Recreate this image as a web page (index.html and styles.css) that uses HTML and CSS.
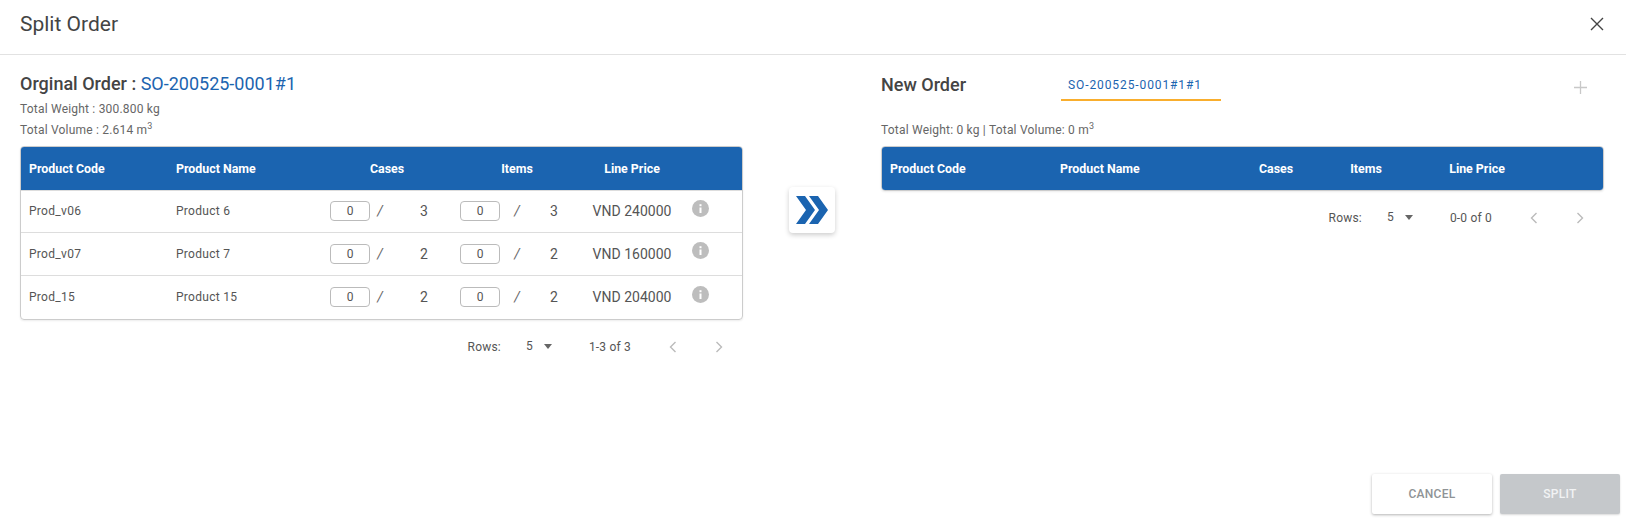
FILE: index.html
```html
<!DOCTYPE html>
<html lang="en">
<head>
<meta charset="utf-8">
<title>Split Order</title>
<link rel="stylesheet" href="styles.css">
</head>
<body>
<div class="dialog">
  <header class="dialog-head">
    <h1 class="dialog-title">Split Order</h1>
    <svg class="close-icon" viewBox="0 0 14 14" width="14" height="14" aria-label="Close"><path d="M1 1l12 12M13 1L1 13"/></svg>
  </header>
  <main class="dialog-body">
    <section class="panel panel-left">
      <h2 class="order-title orig-title">Orginal Order : <span class="order-code">SO-200525-0001#1</span></h2>
      <p class="meta">Total Weight : 300.800 kg</p>
      <p class="meta">Total Volume : 2.614 m<sup>3</sup></p>
      <div class="table">
        <div class="row row-head cols-left">
          <div class="cell">Product Code</div><div class="cell">Product Name</div>
          <div class="cell center">Cases</div><div class="cell center">Items</div><div class="cell center">Line Price</div><div></div>
        </div>
        <div class="row cols-left">
          <div class="cell small">Prod_v06</div><div class="cell small">Product 6</div>
          <div class="qty qty-cases"><input class="qty-input" value="0"><span class="slash">/</span><span class="qty-max">3</span></div>
          <div class="qty qty-items"><input class="qty-input" value="0"><span class="slash">/</span><span class="qty-max">3</span></div>
          <div class="cell center price">VND 240000</div>
          <div class="info"><svg viewBox="0 0 17 17" width="17" height="17"><circle cx="8.5" cy="8.5" r="8.5" fill="#bdbdbd"/><rect x="7.5" y="7.5" width="2" height="5.5" fill="#fff"/><rect x="7.5" y="4.2" width="2" height="2" fill="#fff"/></svg></div>
        </div>
        <div class="row cols-left">
          <div class="cell small">Prod_v07</div><div class="cell small">Product 7</div>
          <div class="qty qty-cases"><input class="qty-input" value="0"><span class="slash">/</span><span class="qty-max">2</span></div>
          <div class="qty qty-items"><input class="qty-input" value="0"><span class="slash">/</span><span class="qty-max">2</span></div>
          <div class="cell center price">VND 160000</div>
          <div class="info"><svg viewBox="0 0 17 17" width="17" height="17"><circle cx="8.5" cy="8.5" r="8.5" fill="#bdbdbd"/><rect x="7.5" y="7.5" width="2" height="5.5" fill="#fff"/><rect x="7.5" y="4.2" width="2" height="2" fill="#fff"/></svg></div>
        </div>
        <div class="row cols-left">
          <div class="cell small">Prod_15</div><div class="cell small">Product 15</div>
          <div class="qty qty-cases"><input class="qty-input" value="0"><span class="slash">/</span><span class="qty-max">2</span></div>
          <div class="qty qty-items"><input class="qty-input" value="0"><span class="slash">/</span><span class="qty-max">2</span></div>
          <div class="cell center price">VND 204000</div>
          <div class="info"><svg viewBox="0 0 17 17" width="17" height="17"><circle cx="8.5" cy="8.5" r="8.5" fill="#bdbdbd"/><rect x="7.5" y="7.5" width="2" height="5.5" fill="#fff"/><rect x="7.5" y="4.2" width="2" height="2" fill="#fff"/></svg></div>
        </div>
      </div>
      <div class="pager">
        <span class="pager-label">Rows:</span>
        <span class="pager-size">5</span>
        <span class="pager-caret"></span>
        <span class="pager-range">1-3 of 3</span>
        <svg class="pager-nav" viewBox="0 0 8 12" width="8" height="12"><path d="M6.5 1L1.5 6l5 5"/></svg>
        <svg class="pager-nav" viewBox="0 0 8 12" width="8" height="12"><path d="M1.5 1l5 5-5 5"/></svg>
      </div>
    </section>

    <div class="transfer-col">
      <button class="transfer-btn" aria-label="Move to new order">
        <svg viewBox="0 0 32 28" width="32" height="28"><path d="M0 0h9l10 14-10 14H0l10-14z"/><path d="M13 0h9l10 14-10 14h-9l10-14z"/></svg>
      </button>
    </div>

    <section class="panel panel-right">
      <div class="new-head">
        <h2 class="order-title new-title">New Order</h2>
        <div class="tab">SO-200525-0001#1#1</div>
        <svg class="plus-icon" viewBox="0 0 13 13" width="13" height="13"><path d="M6.5 0v13M0 6.5h13"/></svg>
      </div>
      <p class="meta new-meta">Total Weight: 0 kg | Total Volume: 0 m<sup>3</sup></p>
      <div class="table">
        <div class="row row-head cols-right">
          <div class="cell">Product Code</div><div class="cell">Product Name</div>
          <div class="cell center">Cases</div><div class="cell center">Items</div><div class="cell center">Line Price</div><div></div>
        </div>
      </div>
      <div class="pager">
        <span class="pager-label">Rows:</span>
        <span class="pager-size">5</span>
        <span class="pager-caret"></span>
        <span class="pager-range">0-0 of 0</span>
        <svg class="pager-nav" viewBox="0 0 8 12" width="8" height="12"><path d="M6.5 1L1.5 6l5 5"/></svg>
        <svg class="pager-nav" viewBox="0 0 8 12" width="8" height="12"><path d="M1.5 1l5 5-5 5"/></svg>
      </div>
    </section>
  </main>
  <footer class="dialog-foot">
    <button class="btn btn-cancel">CANCEL</button>
    <button class="btn btn-split">SPLIT</button>
  </footer>
</div>
</body>
</html>
```
FILE: styles.css
```css
* { box-sizing: border-box; }
html, body { margin: 0; height: 100%; background: #fff; }
body { font-family: Roboto, "Liberation Sans", sans-serif; color: #444; overflow: hidden; }
.dialog { height: 521px; display: flex; flex-direction: column; }

.dialog-head {
  height: 55px; flex: none; display: flex; align-items: center; justify-content: space-between;
  padding: 0 22px 6px 20px; border-bottom: 1px solid #e2e2e2;
}
.dialog-title { margin: 0; font-size: 21px; font-weight: 400; color: #444; }
.close-icon { fill: none; stroke: #444; stroke-width: 1.4; }

.dialog-body { flex: 1; display: flex; align-items: flex-start; padding-left: 20px; }
.panel-left { width: 723px; flex: none; padding-top: 17px; }
.panel-right { width: 723px; flex: none; padding-top: 17px; }
.transfer-col { width: 138px; flex: none; display: flex; justify-content: center; padding: 132px 0 0 0; }

.order-title { margin: 0; font-size: 18px; line-height: 24px; font-weight: 500; color: #444; }
.orig-title { margin-bottom: 3px; }
.order-code { color: #1b64b0; font-weight: 400; }
.meta { margin: 0; font-size: 12px; line-height: 21px; color: #666; letter-spacing: .2px; }
.meta sup { font-size: 9px; line-height: 0; }

.table { border: 1px solid #ccc; border-radius: 4px; overflow: hidden; margin-top: 5px; box-shadow: 0 1px 2px rgba(0,0,0,.08); }
.row { display: grid; align-items: center; height: 43px; padding-bottom: 1px; border-top: 1px solid #ddd; font-size: 12px; }
.row:nth-child(2) { height: 42px; }
.row:nth-child(4) { height: 44px; }
.row-head { background: #1b64b0; color: #fff; font-weight: 700; font-size: 12.4px; border-top: 0; padding-bottom: 0; }
.cols-left { grid-template-columns: 147px 154px 130px 130px 100px 36px 1fr; }
.cols-right { grid-template-columns: 170px 179px 90px 90px 132px 1fr; }
.cell { padding: 0 0 0 8px; white-space: nowrap; }
.cell.center { padding: 0; text-align: center; }
.small { letter-spacing: .3px; color: #555; }
.price { font-size: 14px; color: #555; }

.qty { display: flex; align-items: center; padding-left: 8px; font-size: 14px; color: #555; }
.qty-input {
  width: 40px; height: 20px; padding: 0; text-align: center; font: 12px Roboto, sans-serif; color: #555;
  border: 1px solid #bbb; border-radius: 4px; background: #fff; outline: none;
}
.slash { text-align: center; color: #666; font-style: italic; }
.qty-cases .slash { width: 20px; }
.qty-cases .qty-max { margin-left: 30px; }
.qty-items .slash { width: 34px; }
.qty-items .qty-max { margin-left: 16px; }
.info { display: flex; padding-left: 10px; margin-bottom: 6px; }

.pager { display: flex; align-items: center; justify-content: flex-end; height: 54px; padding-right: 20px; font-size: 12px; color: #555; letter-spacing: .2px; }
.pager-size { margin-left: 25px; font-size: 12px; color: #555; margin-bottom: 3px; }
.pager-caret { width: 0; height: 0; margin-left: 11px; margin-bottom: 2px; border: 4px solid transparent; border-top: 5px solid #666; border-bottom: 0; }
.pager-range { margin-left: 37px; margin-right: 38px; }
.pager-nav { fill: none; stroke: #bbb; stroke-width: 1.4; margin-left: 38px; }
.pager-range + .pager-nav { margin-left: 0; }

.new-head { display: flex; align-items: flex-start; height: 45px; }
.new-title { width: 180px; flex: none; margin-top: 1px; }
.tab {
  width: 160px; height: 29px; padding: 5px 12px 0 0; line-height: 17px; text-align: center; font-size: 12px; letter-spacing: .9px;
  color: #1b64b0; border-bottom: 2px solid #f9ae2d; flex: none; white-space: nowrap;
}
.plus-icon { fill: none; stroke: #c8c8c8; stroke-width: 1.3; margin: 9px 0 0 353px; flex: none; }
.new-meta { margin: 5px 0 8px; line-height: 16px; }

.transfer-btn {
  width: 46px; height: 46px; padding: 0; border: 0; border-radius: 4px; background: #fff;
  display: flex; align-items: center; justify-content: center; box-shadow: 0 2px 5px rgba(0,0,0,.2);
}
.transfer-btn svg { fill: #1b64b0; }

.dialog-foot { flex: none; display: flex; justify-content: flex-end; gap: 8px; padding: 0 6px 7px 0; }
.btn {
  width: 120px; height: 40px; border: 0; border-radius: 2px; font: 500 12px Roboto, sans-serif; letter-spacing: .3px;
}
.btn-cancel { background: #fff; color: #8f9396; box-shadow: 0 1px 3px rgba(0,0,0,.3); }
.btn-split { background: #c5c8cb; color: #f2f3f4; box-shadow: 0 1px 2px rgba(0,0,0,.15); }
```
